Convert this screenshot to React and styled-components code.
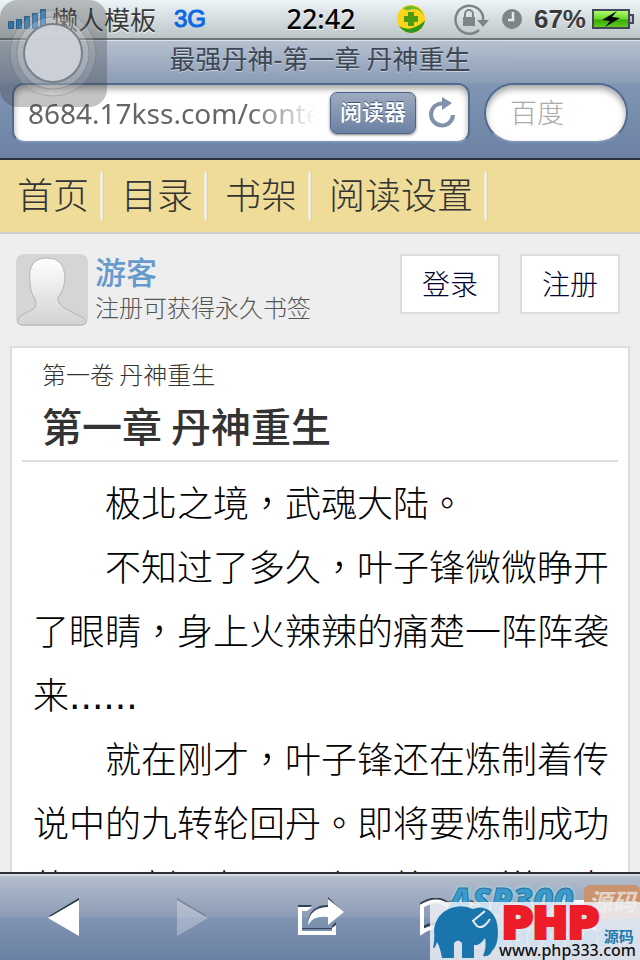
import React from 'react';
import styled, { createGlobalStyle, css } from 'styled-components';

const GlobalStyle = createGlobalStyle`
  * {
    box-sizing: border-box;
  }
  body {
    margin: 0;
    background: #eee;
    font-family: "Noto Sans CJK TC", "Noto Sans CJK SC", sans-serif;
  }
  button, input {
    font-family: inherit;
    margin: 0;
    padding: 0;
    border: 0;
    background: none;
  }
  h1, h2, p {
    margin: 0;
  }
`;

const Screen = styled.div`
  position: relative;
  display: flex;
  flex-direction: column;
  height: 100vh;
  overflow: hidden;
  background: #eee;
`;

const StatusBar = styled.div`
  display: grid;
  grid-template-columns: 1fr auto 1fr;
  align-items: center;
  flex: none;
  height: 40px;
  padding: 0 6px 0 8px;
  background: linear-gradient(#edf4f8, #bcc5c8);
  border-bottom: 2px solid #6d7778;
  color: #3a3a3a;
`;

const StatusGroup = styled.div`
  display: flex;
  align-items: center;
  justify-content: ${({ $end }) => ($end ? 'flex-end' : 'flex-start')};
  gap: ${({ $gap }) => $gap || 6}px;
`;

const Carrier = styled.span`
  font-size: 26px;
  line-height: 36px;
  text-shadow: 0 1px 0 #fff;
`;

const Network = styled.span`
  margin-left: 12px;
  font: 24px/36px "Liberation Sans", sans-serif;
  color: #0967e8;
  -webkit-text-stroke: 1px #0967e8;
`;

const Clock = styled.span`
  font: 500 27px/36px "Noto Sans", sans-serif;
  color: #000;
  text-shadow: 0 1px 0 #fff;
`;

const Battery = styled.span`
  font: bold 26px/36px "Liberation Sans", sans-serif;
  text-shadow: 0 1px 0 #fff;
`;

const BrowserBar = styled.header`
  flex: none;
  height: 120px;
  background: linear-gradient(#b5c1d0 0, #8b9cb6 42px, #8094b3 43px, #6c82a4 100%);
  border-top: 1px solid #dde4ec;
  border-bottom: 2px solid #2d3440;
`;

const PageTitle = styled.div`
  height: 42px;
  font-size: 26px;
  line-height: 34px;
  text-align: center;
  color: #3c4753;
  text-shadow: 0 1px 0 #c9d2de;
`;

const AddressRow = styled.form`
  display: flex;
  gap: 14px;
  padding: 0 12px;
`;

const fieldBox = css`
  height: 60px;
  border: 2px solid #526b8f;
  border-bottom-color: #7d93b5;
  background: #fff;
  box-shadow: inset 0 4px 6px rgba(0, 0, 0, 0.35);
`;

const AddressBox = styled.div`
  ${fieldBox}
  display: flex;
  align-items: center;
  flex: 1;
  min-width: 0;
  padding: 0 12px 0 14px;
  border-radius: 12px;
`;

const AddressInput = styled.input`
  flex: 1;
  min-width: 0;
  height: 44px;
  font: 28px/44px "Noto Sans", sans-serif;
  color: #666;
  outline: none;
  mask-image: linear-gradient(90deg, #000 75%, transparent 98%);
`;

const ReaderButton = styled.button`
  flex: none;
  width: 86px;
  height: 42px;
  margin: 0 12px 0 8px;
  padding-bottom: 6px;
  border: 1px solid #4a648a;
  border-radius: 7px;
  background: linear-gradient(#9dabc0, #6b81a3);
  box-shadow: 0 1px 3px rgba(0, 0, 0, 0.5);
  font-size: 22px;
  font-weight: 500;
  line-height: 34px;
  color: #fff;
  text-shadow: 0 -1px 0 #42546f;
`;

const IconButton = styled.button`
  position: relative;
  display: flex;
  flex: ${({ $grow }) => ($grow ? 1 : 'none')};
  align-items: center;
  justify-content: center;
  height: 100%;
`;

const TabCount = styled.span`
  position: absolute;
  font: bold 20px/24px "Liberation Sans", sans-serif;
  color: #3c4f6e;
`;

const SearchInput = styled.input`
  ${fieldBox}
  width: 144px;
  padding: 0 0 4px 24px;
  border-radius: 30px;
  font-size: 27px;
  font-weight: 300;
  outline: none;
  &::placeholder {
    color: #aaa;
    opacity: 1;
  }
`;

const Nav = styled.nav`
  display: flex;
  align-items: center;
  flex: none;
  height: 74px;
  background: #eedc98;
  border-bottom: 2px solid #ccc;
`;

const NavLink = styled.a`
  height: 48px;
  padding: 0 15px 0 17px;
  background: linear-gradient(90deg, #f2e9c4, #f4f3ee 50%, #c8c3b2) right / 4px 100% no-repeat;
  font-size: 36px;
  font-weight: 300;
  line-height: 42px;
  color: #333;
  text-decoration: none;
`;

const UserBar = styled.section`
  display: flex;
  align-items: flex-start;
  flex: none;
  height: 112px;
  padding: 20px 20px 0 16px;
`;

const Avatar = styled.svg`
  flex: none;
  margin-right: 7px;
`;

const UserInfo = styled.div`
  flex: 1;
`;

const UserName = styled.p`
  font-size: 31px;
  font-weight: 500;
  line-height: 34px;
  color: #6699cc;
`;

const UserHint = styled.p`
  font-size: 24px;
  font-weight: 300;
  line-height: 38px;
  color: #555;
`;

const UserLink = styled.a`
  width: 100px;
  height: 60px;
  margin-left: 20px;
  border: 2px solid #ddd;
  background: #fff;
  font-size: 28px;
  font-weight: 300;
  line-height: 54px;
  text-align: center;
  color: #003;
  text-decoration: none;
`;

const Article = styled.article`
  flex: 1;
  min-height: 0;
  margin: 0 10px;
  padding: 0 10px;
  border: 2px solid #ddd;
  border-bottom: 0;
  background: #fff;
  overflow: hidden;
`;

const ChapterHead = styled.div`
  padding: 8px 20px 0;
  height: 114px;
  border-bottom: 2px solid #ddd;
  color: #333;
`;

const Volume = styled.h2`
  font-size: 24px;
  font-weight: 300;
  line-height: 36px;
`;

const Chapter = styled.h1`
  font-size: 40px;
  font-weight: 500;
  line-height: 66px;
`;

const ChapterBody = styled.div`
  padding: 7px 8px 0 11px;
  font-size: 36px;
  font-weight: 300;
  line-height: 64px;
  color: #000;
`;

const Paragraph = styled.p`
  text-indent: 2em;
`;

const Dots = styled.span`
  font-family: "DejaVu Sans", sans-serif;
  font-weight: 400;
  line-height: 1;
`;

const Toolbar = styled.footer`
  display: flex;
  flex: none;
  height: 88px;
  border-top: 2px solid #2d3036;
  background: linear-gradient(#e5e8ee 0, #b2bdcc 3px, #8c9cb5 43px, #8094b3 44px, #6b81a3 100%);
`;

const AssistiveTouch = styled.button`
  position: absolute;
  top: 0;
  left: 0;
  width: 107px;
  height: 107px;
  border-radius: 18px;
  background: rgba(60, 60, 60, 0.3);
`;

const FirstMark = styled.div`
  position: absolute;
  right: 0;
  bottom: 0;
  width: 192px;
  height: 80px;
  font: italic 800 35px/40px "Open Sans", sans-serif;
  color: #3a9bcd;
  -webkit-text-stroke: 1px #2c6f9c;
  text-shadow: 0 0 3px #a4dcea, 0 0 3px #a4dcea, 0 0 4px #a4dcea;
`;

const FirstBadge = styled.span`
  position: absolute;
  top: 5px;
  right: 0;
  width: 56px;
  height: 34px;
  border-radius: 6px;
  background: #ca936d;
  font: italic bold 24px/32px "Noto Sans CJK SC", sans-serif;
  text-align: center;
  color: #e5d5c9;
  text-shadow: none;
  -webkit-text-stroke: 0;
`;

const FirstDomain = styled.span`
  position: absolute;
  top: 40px;
  left: 20px;
  font-size: 26px;
  line-height: 32px;
`;

const SecondMark = styled.div`
  position: absolute;
  right: 0;
  bottom: 0;
  display: flex;
  align-items: flex-end;
  width: 210px;
  height: 58px;
  padding-left: 3px;
  background: rgba(238, 241, 247, 0.84);
`;

const MarkText = styled.div`
  display: grid;
  grid-template-columns: auto 1fr;
  grid-template-rows: 40px 18px;
  flex: 1;
  height: 58px;
`;

const MarkName = styled.strong`
  padding-left: 3px;
  font: bold 42px/44px "DejaVu Sans", sans-serif;
  color: #ec1c28;
  -webkit-text-stroke: 4px #ec1c28;
`;

const MarkKind = styled.span`
  padding: 24px 0 0 5px;
  font: bold 15px/20px "Noto Sans CJK SC", sans-serif;
  color: #2378ae;
`;

const MarkDomain = styled.span`
  grid-column: 1 / 3;
  font: 500 16px/16px "Noto Sans", sans-serif;
  color: #111;
`;

const navItems = ['首页', '目录', '书架', '阅读设置'];

const paragraphs = [
  { text: '极北之境，武魂大陆。' },
  { text: '不知过了多久，叶子锋微微睁开了眼睛，身上火辣辣的痛楚一阵阵袭来', dots: '......' },
  { text: '就在刚才，叶子锋还在炼制着传说中的九转轮回丹。即将要炼制成功的那一刻，却顾不上丹炉里一道强大' },
];

const SignalIcon = () => (
  <svg width="38" height="20" viewBox="0 0 38 20" aria-hidden="true">
    <g fill="#2a8fd8" stroke="#2a6ba5" strokeWidth="1">
      <path d="M.5 12.500h5v7h-5zM8.500 10.500h5v9h-5zM16.500 7.500h5v12h-5zM24.500 4.500h5v15h-5zM32.500 .5h5v19h-5z" />
    </g>
  </svg>
);

const PlusBadgeIcon = () => (
  <svg width="30" height="32" viewBox="0 0 30 32" aria-hidden="true">
    <circle cx="15" cy="16" r="14" fill="#fbd51b" />
    <path d="M7 5A14 14 0 0 1 28 13Q24 5 16 6Q10 9 7 5Z" fill="#6dbb2c" />
    <path d="M29 17A14 14 0 0 1 3 23Q12 28 19 24Q26 21 29 17Z" fill="#31961d" />
    <path d="M12 9h6v4h4v6h-4v4h-6v-4H8v-6h4z" fill="#4b9c12" />
  </svg>
);

const LockIcon = () => (
  <svg width="36" height="32" viewBox="0 0 36 32" fill="none" stroke="#7b8685" aria-hidden="true">
    <path d="M25 27A14 14 0 1 1 29 13V17" strokeWidth="2.500" />
    <path d="M23 17h12l-6 7z" fill="#7b8685" stroke="none" />
    <path d="M9 14h12v9H9z" fill="#7b8685" stroke="none" />
    <path d="M11 14v-3a4 4 0 0 1 8 0v3" strokeWidth="2" />
  </svg>
);

const AlarmIcon = () => (
  <svg width="20" height="20" viewBox="0 0 20 20" aria-hidden="true">
    <circle cx="10" cy="10" r="10" fill="#7b8685" />
    <path d="M11 3v8H6" fill="none" stroke="#e5e9eb" strokeWidth="2.500" />
  </svg>
);

const BatteryIcon = () => (
  <svg width="42" height="22" viewBox="0 0 42 22" aria-hidden="true">
    <defs>
      <linearGradient id="charge" x2="0" y2="1">
        <stop offset="0" stopColor="#b5ff75" />
        <stop offset=".5" stopColor="#69d827" />
        <stop offset=".55" stopColor="#38aa05" />
        <stop offset="1" stopColor="#65cf22" />
      </linearGradient>
    </defs>
    <path d="M1 2h36v18H1z" fill="url(#charge)" stroke="#444759" strokeWidth="2" />
    <path d="M38 7h3v8h-3" fill="#bcc5cf" stroke="#444759" strokeWidth="2" />
    <path d="M25 3 10 12l8 1-5 6 15-9-8-1z" fill="#000" />
  </svg>
);

const ReloadIcon = () => (
  <svg width="28" height="32" viewBox="0 0 28 32" aria-hidden="true">
    <path d="M15 6.500A11 11 0 1 0 25 18" fill="none" stroke="#8092ab" strokeWidth="4" />
    <path d="m14 0 10 6-10 7z" fill="#8092ab" />
  </svg>
);

const TouchIcon = () => (
  <svg width="107" height="107" viewBox="0 0 107 107" fill="#fff" aria-hidden="true">
    <circle cx="53" cy="53" r="43" fillOpacity=".12" stroke="#555" strokeOpacity=".25" />
    <circle cx="53" cy="53" r="36" fillOpacity=".2" stroke="#555" strokeOpacity=".3" />
    <circle cx="53" cy="53" r="29" fill="#cfd2d9" fillOpacity=".93" stroke="#7a8089" strokeWidth="2" />
  </svg>
);

const ArrowIcon = ({ forward }) => (
  <svg width="32" height="38" viewBox="0 0 32 38" opacity={forward ? 0.28 : 1} aria-hidden="true">
    <g transform={forward ? 'translate(32 0) scale(-1 1)' : undefined}>
      <path d="M31 0v20L1 18z" fill="#273341" />
      <path d="M31 2v36L0 20z" fill="#fff" />
    </g>
  </svg>
);

const ShareIcon = () => (
  <svg width="48" height="40" viewBox="0 0 48 40" aria-hidden="true">
    <path d="M2 8h14l-3 3H2zM6 32h30v-3l4-4v6H6z" fill="#344255" />
    <path d="M2 10h14l-5 4H6v20h30v-3l4-3v10H2z" fill="#fff" />
    <path d="M32 0 46 14H32v-4Q15 10 12 25Q14 8 32 8z" fill="#344255" />
    <path d="m32 2 16 13-16 13v-8Q17 18 12 28Q13 11 32 10z" fill="#fff" />
  </svg>
);

const BookIcon = () => (
  <svg width="56" height="38" viewBox="0 0 56 38" fill="none" aria-hidden="true">
    <path d="M2 31V6Q17-3 28 6Q39-3 54 6v25Q40 22 28 31Q15 22 2 31ZM28 6v25" stroke="#344255" strokeWidth="4" />
    <path d="M2 34V8Q17-1 28 8Q39-1 54 8v26Q40 25 28 34Q15 25 2 34ZM28 8v26" stroke="#fff" strokeWidth="4" />
  </svg>
);

const TabsIcon = () => (
  <svg width="44" height="40" viewBox="0 0 44 40" fill="none" stroke="#fff" strokeWidth="4" aria-hidden="true">
    <path d="M9 10V5h24v5M2 10h38v28H2z" />
  </svg>
);

const ElephantIcon = () => (
  <svg width="66" height="56" viewBox="0 0 66 56" fill="#1b75ad" aria-hidden="true">
    <path d="M1 25Q4 9 18 4Q29 0 40 5Q49 1 57 7Q65 14 65 28Q65 42 59 47Q57 53 50 52Q54 42 52 34Q47 42 41 41V54H29V39Q25 34 21 39V54H9Q7 43 4 38Q2 45 0 44Q2 36 1 25Z" />
    <path d="M52 7 40 17l4 5Q50 26 57 15" fill="none" stroke="#e6edf4" strokeWidth="2" />
  </svg>
);

const App = () => {
  return (
    <Screen>
      <GlobalStyle />
      <StatusBar>
        <StatusGroup>
          <SignalIcon />
          <Carrier>懒人模板</Carrier>
          <Network>3G</Network>
        </StatusGroup>
        <Clock>22:42</Clock>
        <StatusGroup $end $gap={28}>
          <PlusBadgeIcon />
          <StatusGroup $end $gap={12}>
            <LockIcon />
            <AlarmIcon />
            <StatusGroup $end>
              <Battery>67%</Battery>
              <BatteryIcon />
            </StatusGroup>
          </StatusGroup>
        </StatusGroup>
      </StatusBar>
      <BrowserBar>
        <PageTitle>最强丹神-第一章 丹神重生</PageTitle>
        <AddressRow>
          <AddressBox>
            <AddressInput aria-label="网址" defaultValue="8684.17kss.com/conte" />
            <ReaderButton type="button">阅读器</ReaderButton>
            <IconButton type="button" aria-label="刷新"><ReloadIcon /></IconButton>
          </AddressBox>
          <SearchInput aria-label="搜索" placeholder="百度" />
        </AddressRow>
      </BrowserBar>
      <Nav>
        {navItems.map((item) => (
          <NavLink key={item} href="#">{item}</NavLink>
        ))}
      </Nav>
      <UserBar>
        <Avatar width="72" height="72" viewBox="0 0 72 72" aria-hidden="true">
          <defs>
            <linearGradient id="person" x2="0" y2="1">
              <stop offset="0" stopColor="#fff" />
              <stop offset="1" stopColor="#d2d2d2" />
            </linearGradient>
          </defs>
          <rect width="72" height="72" rx="8" fill="#d5d5d5" />
          <path d="M31 4Q48 4 49 22Q49 36 42 43Q41 49 48 54L64 62Q71 65 70 69Q69 71 64 71H7Q0 71 2 65Q4 61 14 57Q22 54 19 45Q14 38 14 28Q11 4 31 4Z" fill="url(#person)" stroke="#b4b4b4" />
        </Avatar>
        <UserInfo>
          <UserName>游客</UserName>
          <UserHint>注册可获得永久书签</UserHint>
        </UserInfo>
        <UserLink href="#">登录</UserLink>
        <UserLink href="#">注册</UserLink>
      </UserBar>
      <Article>
        <ChapterHead>
          <Volume>第一卷 丹神重生</Volume>
          <Chapter>第一章 丹神重生</Chapter>
        </ChapterHead>
        <ChapterBody>
          {paragraphs.map(({ text, dots }) => (
            <Paragraph key={text}>
              {text}
              {dots && <Dots>{dots}</Dots>}
            </Paragraph>
          ))}
        </ChapterBody>
      </Article>
      <Toolbar>
        <IconButton $grow aria-label="后退"><ArrowIcon /></IconButton>
        <IconButton $grow aria-label="前进"><ArrowIcon forward /></IconButton>
        <IconButton $grow aria-label="分享"><ShareIcon /></IconButton>
        <IconButton $grow aria-label="书签"><BookIcon /></IconButton>
        <IconButton $grow aria-label="标签页">
          <TabsIcon />
          <TabCount>5</TabCount>
        </IconButton>
      </Toolbar>
      <AssistiveTouch aria-label="辅助触控"><TouchIcon /></AssistiveTouch>
      <FirstMark>
        ASP300
        <FirstBadge>源码</FirstBadge>
        <FirstDomain>asp300.net</FirstDomain>
      </FirstMark>
      <SecondMark>
        <ElephantIcon />
        <MarkText>
          <MarkName>PHP</MarkName>
          <MarkKind>源码</MarkKind>
          <MarkDomain>www.php333.com</MarkDomain>
        </MarkText>
      </SecondMark>
    </Screen>
  );
};

export default App;
